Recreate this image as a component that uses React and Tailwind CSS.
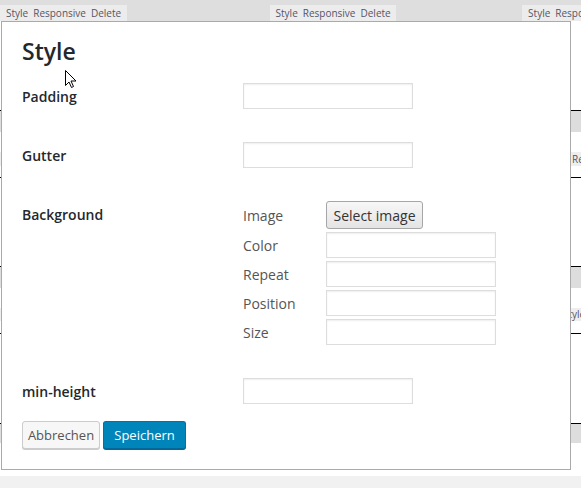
import React from "react";

function Field({ w = "w-[170px]" }) {
  return (
    <div
      className={`${w} h-[26px] border border-[#dddddd] bg-white shadow-[inset_0_1px_2px_rgba(0,0,0,0.07)]`}
    />
  );
}

function Tab({ className = "" }) {
  return (
    <div
      className={`h-[16px] bg-[#ececec] text-[10px] leading-[16px] text-[#555566] whitespace-nowrap overflow-hidden flex gap-[5px] pl-[6px] ${className}`}
    >
      <span>Style</span>
      <span>Responsive</span>
      <span>Delete</span>
    </div>
  );
}

function MainRow({ label, children }) {
  return (
    <div className="flex items-center h-[26px]">
      <div className="w-[221px] pt-[2px] text-[14px] leading-[20px] font-semibold text-[#23282d]">
        {label}
      </div>
      {children}
    </div>
  );
}

function SubRow({ label, children }) {
  return (
    <div className="flex items-center">
      <div className="w-[83px] pt-[2px] text-[14px] leading-[20px] text-[#555555]">{label}</div>
      {children}
    </div>
  );
}

export default function App() {
  return (
    <div className="relative w-[581px] h-[488px] overflow-hidden bg-white font-['Open_Sans',sans-serif]">
      {/* page behind the dialog */}
      <div className="flex flex-col h-full">
        <div className="h-[21px] bg-[#dedede] flex items-end shrink-0">
          <Tab className="w-[129px]" />
          <Tab className="w-[129px] ml-[143px]" />
          <Tab className="w-[60px] ml-[126px]" />
        </div>
        <div className="h-[89px] shrink-0" />
        <div className="border-t border-black h-[22px] bg-[#dddddd] shrink-0" />
        <div className="h-[20px] shrink-0" />
        <div className="h-[14px] bg-[#eeeeee] shrink-0 text-[10px] leading-[14px] text-[#555566] pl-[572px] whitespace-nowrap overflow-hidden">
          Responsive
        </div>
        <div className="h-[12px] shrink-0 border-b border-black" />
        <div className="h-[88px] shrink-0" />
        <div className="border-t border-black h-[22px] bg-[#dddddd] shrink-0" />
        <div className="h-[20px] shrink-0" />
        <div className="h-[13px] bg-[#eeeeee] shrink-0 text-[10px] leading-[13px] text-[#555566] pl-[563px] whitespace-nowrap overflow-hidden">
          Style
        </div>
        <div className="h-[13px] shrink-0 border-b border-black" />
        <div className="h-[89px] shrink-0" />
        <div className="border-t border-black h-[20px] bg-[#dddddd] shrink-0" />
        <div className="h-[33px] shrink-0" />
        <div className="flex-1 bg-[#f1f1f1]" />
      </div>

      {/* dialog */}
      <div className="absolute left-[1px] top-[21px] w-[570px] h-[449px] border border-[#aaaaaa] bg-white">
        <div className="flex flex-col px-[20px] pt-[15px]">
          <h1 className="text-[23px] leading-[28px] font-semibold text-[#23282d]">Style</h1>
          <div className="mt-[18px] flex flex-col gap-[33px]">
            <MainRow label="Padding">
              <Field />
            </MainRow>
            <MainRow label="Gutter">
              <Field />
            </MainRow>
            <div className="flex">
              <div className="w-[221px] pt-[4px] text-[14px] leading-[20px] font-semibold text-[#23282d]">
                Background
              </div>
              <div className="flex flex-col gap-[3px]">
                <SubRow label="Image">
                  <button className="h-[28px] w-[97px] pt-[1px] border border-[#a6a6a6] rounded-[3px] bg-linear-to-b from-[#f7f7f7] to-[#e4e4e4] text-[14px] leading-[20px] text-[#333333]">
                    Select image
                  </button>
                </SubRow>
                <SubRow label="Color">
                  <Field />
                </SubRow>
                <SubRow label="Repeat">
                  <Field />
                </SubRow>
                <SubRow label="Position">
                  <Field />
                </SubRow>
                <SubRow label="Size">
                  <Field />
                </SubRow>
              </div>
            </div>
            <MainRow label="min-height">
              <Field />
            </MainRow>
          </div>
          <div className="mt-[17px] flex gap-[3px]">
            <button className="h-[28px] w-[78px] border border-[#cccccc] rounded-[3px] bg-[#f7f7f7] shadow-[0_1px_0_#cccccc] text-[13px] leading-[20px] text-[#555555]">
              Abbrechen
            </button>
            <button className="h-[28px] w-[83px] border border-[#0073aa] border-b-[#006799] rounded-[3px] bg-[#0085ba] shadow-[0_1px_0_#006799] text-[13px] leading-[20px] text-white">
              Speichern
            </button>
          </div>
        </div>
      </div>

      {/* mouse cursor */}
      <svg
        className="absolute left-[64px] top-[69px]"
        width="14"
        height="20"
        viewBox="0 0 14 20"
      >
        <path
          d="M1.5 1.5 L1.5 16.5 L5 13 L7.5 18.5 L9.5 17.5 L7 12 L12 12 Z"
          fill="white"
          stroke="black"
          strokeWidth="1"
          strokeLinejoin="miter"
        />
      </svg>
    </div>
  );
}
